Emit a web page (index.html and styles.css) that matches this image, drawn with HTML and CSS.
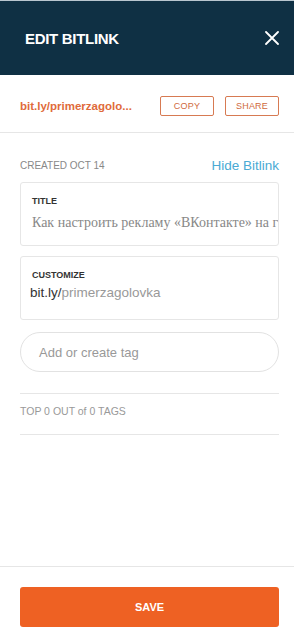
FILE: index.html
```html
<!DOCTYPE html>
<html lang="en">
<head>
  <meta charset="UTF-8">
  <meta name="viewport" content="width=device-width, initial-scale=1.0">
  <title>Edit Bitlink</title>
  <link rel="stylesheet" href="styles.css">
</head>
<body>
  <div class="panel">
    <!-- header -->
    <div class="header">
      <h1>EDIT BITLINK</h1>
      <svg class="close" width="14" height="14" viewBox="0 0 14 14">
        <path d="M1 1L13 13M13 1L1 13" stroke="#fff" stroke-width="1.8" stroke-linecap="round"/>
      </svg>
    </div>

    <!-- link row -->
    <div class="link-row">
      <span class="short-link">bit.ly/primerzagolo...</span>
      <div class="actions">
        <button class="btn-outline">COPY</button>
        <button class="btn-outline">SHARE</button>
      </div>
    </div>

    <div class="content">
      <div class="meta-row">
        <span class="created">CREATED OCT 14</span>
        <a class="hide-link">Hide Bitlink</a>
      </div>

      <div class="field">
        <div class="field-label">TITLE</div>
        <div class="field-value title-value">Как настроить рекламу «ВКонтакте» на г</div>
      </div>

      <div class="field">
        <div class="field-label">CUSTOMIZE</div>
        <div class="field-value custom-value">bit.ly/<span class="slug">primerzagolovka</span></div>
      </div>

      <div class="tag-input">Add or create tag</div>

      <div class="tags-info">TOP 0 OUT of 0 TAGS</div>
    </div>

    <div class="footer">
      <button class="btn-save">SAVE</button>
    </div>
  </div>
</body>
</html>
```

FILE: styles.css
```css
/* base */
body { margin: 0; font-family: "Liberation Sans", Arial, sans-serif; background: #fff; }
.panel { display: flex; flex-direction: column; height: 638px; }

/* header */
.header { height: 74px; border-top: 1px solid #b9c6cf; background: #0f3044; display: flex; align-items: center; justify-content: space-between; padding: 0 15px 0 25px; }
.header h1 { margin: 0; color: #fff; font-size: 15px; font-weight: bold; letter-spacing: -0.3px; }
.close { display: block; }

/* link row */
.link-row { display: flex; align-items: center; justify-content: space-between; padding: 21px 15px 16px 20px; border-bottom: 1px solid #e6e6e6; }
.short-link { color: #df6b3b; font-size: 11.5px; font-weight: bold; }
.actions { display: flex; gap: 11px; }
.btn-outline { width: 54px; height: 20px; padding: 0; background: #fff; border: 1px solid #d77a52; border-radius: 2px; color: #cf6a40; font-family: inherit; font-size: 9px; letter-spacing: 0.2px; }

/* content */
.content { padding: 0 15px 0 20px; }
.meta-row { display: flex; align-items: center; justify-content: space-between; margin-top: 23px; height: 18px; }
.created { font-size: 10px; color: #888; }
.hide-link { font-size: 13.5px; color: #4aaad4; }

.field { border: 1px solid #e6e6e6; border-radius: 3px; padding: 13px 0 14px 11px; margin-top: 8px; overflow: hidden; }
.field + .field { margin-top: 10px; padding-bottom: 17px; }
.field-label { font-size: 9px; line-height: 11px; font-weight: bold; color: #333; }
.field-value { white-space: nowrap; overflow: hidden; }
.title-value { margin-top: 8px; font-family: "Liberation Serif", "Times New Roman", serif; font-size: 14px; line-height: 16px; color: #888; }
.custom-value { margin-top: 3px; font-size: 13.5px; line-height: 18px; color: #333; margin-left: -2px; }
.slug { color: #999; }

.tag-input { margin-top: 12px; height: 38px; border: 1px solid #e2e2e2; border-radius: 20px; display: flex; align-items: center; padding-left: 18px; font-size: 13px; color: #999; }

.tags-info { margin-top: 21px; border-top: 1px solid #e6e6e6; border-bottom: 1px solid #e6e6e6; padding: 10px 0 16px; font-size: 10.5px; line-height: 14px; color: #999; }

/* footer */
.footer { margin-top: auto; border-top: 1px solid #e6e6e6; padding: 20px 15px 11px 20px; }
.btn-save { display: block; width: 100%; height: 40px; border: none; border-radius: 3px; background: #ee6123; color: #fff; font-family: inherit; font-size: 11px; font-weight: bold; }
```
